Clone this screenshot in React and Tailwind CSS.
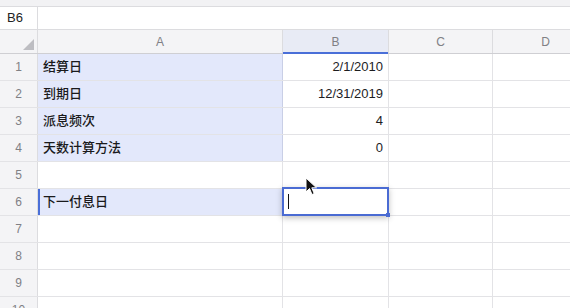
import React from 'react';

const rows = [
  { label: '结算日', value: '2/1/2010', hl: true },
  { label: '到期日', value: '12/31/2019', hl: true },
  { label: '派息频次', value: '4', hl: true },
  { label: '天数计算方法', value: '0', hl: true },
  { label: '', value: '', hl: false },
  { label: '下一付息日', value: '', hl: true, active: true },
  { label: '', value: '', hl: false },
  { label: '', value: '', hl: false },
  { label: '', value: '', hl: false },
  { label: '', value: '', hl: false },
];

const font = { fontFamily: '"Liberation Sans", "Noto Sans CJK SC", sans-serif' };

function Pointer() {
  return (
    <svg width="13" height="19" viewBox="0 0 13 19" className="absolute left-[305px] top-[177px]">
      <path d="M1 1 L1 15 L4.5 11.5 L7 17.5 L9.2 16.6 L6.8 10.8 L11.5 10.8 Z" fill="#111" stroke="#fff" strokeWidth="1" strokeLinejoin="round" />
    </svg>
  );
}

export default function App() {
  return (
    <div className="relative w-[570px] h-[308px] overflow-hidden bg-white text-[13px]" style={font}>
      {/* top strip */}
      <div className="h-[7px] bg-[#f2f2f4] border-b border-[#dcdcdf]" />

      {/* formula bar */}
      <div className="flex h-[23px] border-b border-[#dcdcdf]">
        <div className="w-[38px] border-r border-[#dcdcdf] flex items-center pl-[7px] text-[#222]">B6</div>
        <div className="flex-1" />
      </div>

      {/* column header */}
      <div className="flex w-[620px] h-[24px] bg-[#f4f4f6] border-b border-[#cfcfd3] text-[12px] text-[#808085]">
        <div className="w-[38px] shrink-0 border-r border-[#dcdcdf] relative">
          <svg width="11" height="11" viewBox="0 0 11 11" className="absolute right-[3px] bottom-[3px]">
            <path d="M11 0 L11 11 L0 11 Z" fill="#bdbdc2" />
          </svg>
        </div>
        <div className="w-[245px] shrink-0 border-r border-[#dcdcdf] flex items-center justify-center">A</div>
        <div className="w-[106px] shrink-0 border-r border-[#dcdcdf] flex items-center justify-center bg-[#e8ebf5] relative">
          B
          <div className="absolute left-0 right-0 bottom-[-1px] h-[2px] bg-[#4a6fd8]" />
        </div>
        <div className="w-[104px] shrink-0 border-r border-[#dcdcdf] flex items-center justify-center">C</div>
        <div className="w-[106px] shrink-0 border-r border-[#dcdcdf] flex items-center justify-center">D</div>
      </div>

      {/* rows */}
      {rows.map((r, i) => (
        <div key={i} className="flex w-[620px] h-[27px] border-b border-[#e3e3e6]">
          <div className="w-[38px] shrink-0 border-r border-[#dcdcdf] bg-[#f4f4f6] flex items-center justify-center text-[12px] text-[#808085]">
            {i + 1}
          </div>
          <div
            className={`w-[245px] shrink-0 border-r flex items-center pl-[5px] font-medium text-[#1a1a1c] ${
              r.hl ? 'bg-[#e3e8fb] border-[#c9cfe6]' : 'border-[#e3e3e6]'
            } ${r.active ? 'shadow-[inset_2px_0_0_#4a6fd8]' : ''}`}
          >
            {r.label}
          </div>
          <div className="w-[106px] shrink-0 border-r border-[#e3e3e6] flex items-center justify-end pr-[5px] text-[#1d1d1f]">
            {r.value}
          </div>
          <div className="w-[104px] shrink-0 border-r border-[#e3e3e6]" />
          <div className="w-[106px] shrink-0 border-r border-[#e3e3e6]" />
        </div>
      ))}

      {/* active cell editor */}
      <div className="absolute left-[282px] top-[187px] w-[107px] h-[29px] border-2 border-[#4a6bd3] bg-white shadow-[0_2px_6px_rgba(0,0,0,0.25)]">
        <div className="absolute left-[4px] top-[5px] w-[1px] h-[15px] bg-[#111]" />
        <div className="absolute right-[-3px] bottom-[-3px] w-[4px] h-[4px] bg-[#4a6bd3]" />
      </div>

      <Pointer />
    </div>
  );
}
